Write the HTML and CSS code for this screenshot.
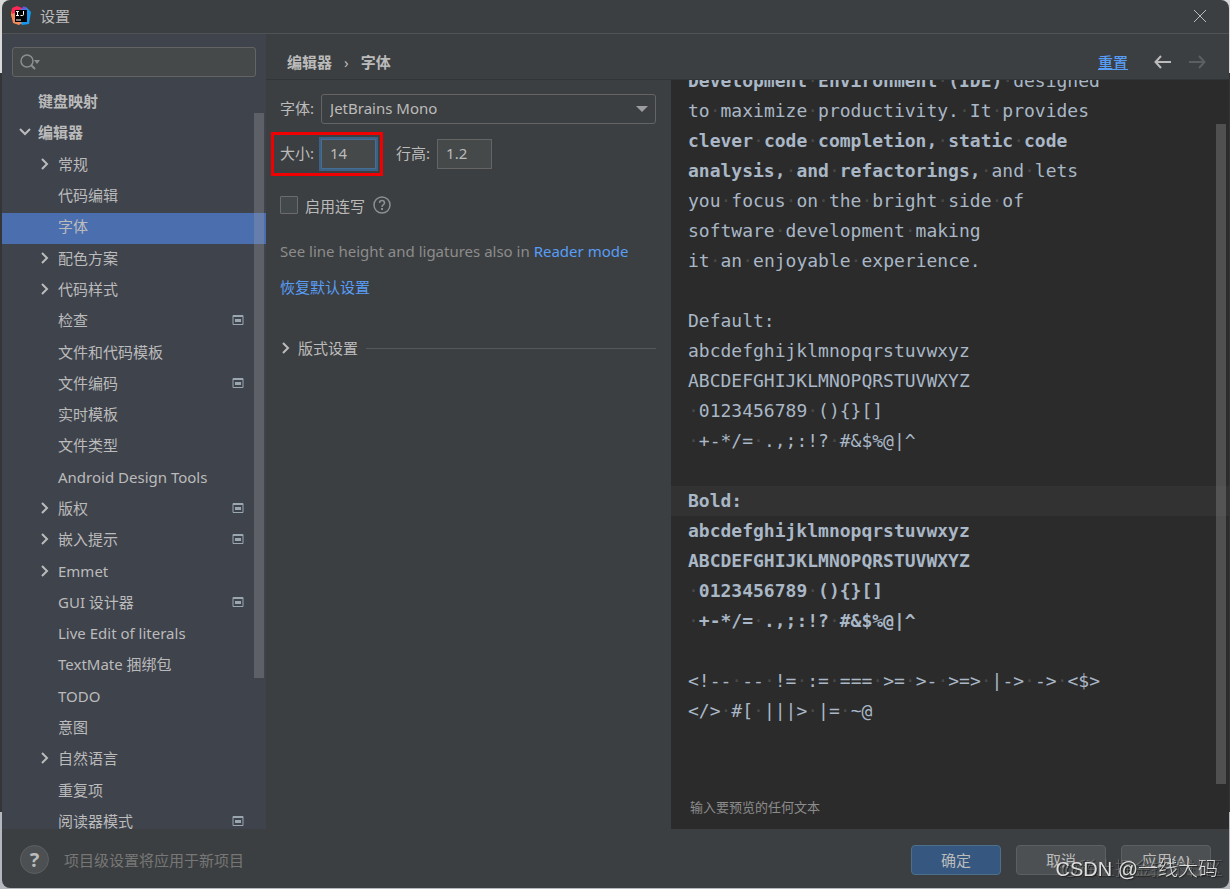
FILE: index.html
```html
<!DOCTYPE html>
<html lang="zh-CN">
<head>
<meta charset="UTF-8">
<meta name="viewport" content="width=device-width, initial-scale=1.0">
<title>设置</title>
<link rel="stylesheet" href="styles.css">
</head>
<body>

<!-- Shared icons -->
<svg class="sprite" aria-hidden="true">
  <symbol id="chevron" viewBox="0 0 16 16"><path d="M5 3l5 5-5 5" fill="none" stroke="currentColor" stroke-width="2"/></symbol>
  <symbol id="project" viewBox="0 0 12 12"><path d="M1 1.500h10v9H1z" fill="none" stroke="currentColor" stroke-width="1"/><path d="M1 1h10v2H1zM3 5h6v3H3z" fill="currentColor"/></symbol>
</svg>

<div class="window">
  <header class="titlebar">
    <svg class="logo" viewBox="0 0 20 20">
      <path d="M1 3l6-2 4 4-5 9-5-2-1-4z" fill="#fc801d"/>
      <path d="M1 2l5-2 5 2-2 5-8 2z" fill="#fe2857"/>
      <path d="M10 3l5-2 5 5-2 12-7 1-3-4z" fill="#1798f0"/>
      <path d="M10 3l3-3 3 4z" fill="#7b4fd0"/>
      <path d="M0 8l5-1v6l6 4-3 2-6-2z" fill="#f58a5a"/>
      <path d="M4 4h12v12H4z" fill="#000"/>
      <path d="M5 5.500h3M6.500 5v5M5 9.500h3M12.500 5v3.500q0 1-1 1H9.500M5 14h5" fill="none" stroke="#fff"/>
    </svg>
    <span class="title">设置</span>
    <button class="close" aria-label="关闭"><svg viewBox="0 0 14 14"><path d="M1 1l12 12M13 1L1 13" stroke="currentColor"/></svg></button>
  </header>

  <div class="main">
    <aside class="sidebar">
      <div class="search">
        <svg viewBox="0 0 22 18"><circle cx="8" cy="8" r="6" fill="none" stroke="currentColor" stroke-width="1.500"/><path d="M12 12l4 4" stroke="currentColor" stroke-width="2"/><path d="M15 7h6l-3 4z" fill="currentColor"/></svg>
        <input type="text" aria-label="搜索">
      </div>
      <ul class="tree">
        <li class="top"><span>键盘映射</span></li>
        <li class="top open"><svg class="arrow"><use href="#chevron"/></svg><span>编辑器</span></li>
        <li><svg class="arrow"><use href="#chevron"/></svg><span>常规</span></li>
        <li><span>代码编辑</span></li>
        <li class="selected"><span>字体</span></li>
        <li><svg class="arrow"><use href="#chevron"/></svg><span>配色方案</span></li>
        <li><svg class="arrow"><use href="#chevron"/></svg><span>代码样式</span></li>
        <li><span>检查</span><svg class="badge"><use href="#project"/></svg></li>
        <li><span>文件和代码模板</span></li>
        <li><span>文件编码</span><svg class="badge"><use href="#project"/></svg></li>
        <li><span>实时模板</span></li>
        <li><span>文件类型</span></li>
        <li><span>Android Design Tools</span></li>
        <li><svg class="arrow"><use href="#chevron"/></svg><span>版权</span><svg class="badge"><use href="#project"/></svg></li>
        <li><svg class="arrow"><use href="#chevron"/></svg><span>嵌入提示</span><svg class="badge"><use href="#project"/></svg></li>
        <li><svg class="arrow"><use href="#chevron"/></svg><span>Emmet</span></li>
        <li><span>GUI 设计器</span><svg class="badge"><use href="#project"/></svg></li>
        <li><span>Live Edit of literals</span></li>
        <li><span>TextMate 捆绑包</span></li>
        <li><span>TODO</span></li>
        <li><span>意图</span></li>
        <li><svg class="arrow"><use href="#chevron"/></svg><span>自然语言</span></li>
        <li><span>重复项</span></li>
        <li><span>阅读器模式</span><svg class="badge"><use href="#project"/></svg></li>
      </ul>
      <div class="tree-scroll"></div>
    </aside>

    <section class="page">
      <div class="crumbs">
        <b>编辑器</b><span class="sep">›</span><b>字体</b>
        <a href="#" class="reset">重置</a>
        <button class="nav" aria-label="后退"><svg viewBox="0 0 18 14"><path d="M17 7H2M7 1L1.500 7 7 13" fill="none" stroke="currentColor" stroke-width="2"/></svg></button>
        <button class="nav" aria-label="前进" disabled><svg viewBox="0 0 18 14"><path d="M1 7h15M11 1l5.500 6L11 13" fill="none" stroke="currentColor" stroke-width="2"/></svg></button>
      </div>

      <div class="panes">
        <form class="settings">
          <div class="row">
            <label for="font">字体:</label>
            <div class="select"><select id="font"><option>JetBrains Mono</option></select></div>
          </div>
          <div class="row sizes">
            <div class="marked">
              <label for="size">大小:</label>
              <input id="size" class="num focused" type="text" value="14">
            </div>
            <label for="lineheight">行高:</label>
            <input id="lineheight" class="num" type="text" value="1.2">
          </div>
          <div class="row ligatures">
            <input id="lig" type="checkbox">
            <label for="lig">启用连写</label>
            <svg class="hint" viewBox="0 0 18 18"><circle cx="9" cy="9" r="8" fill="none" stroke="currentColor" stroke-width="1.500"/><path d="M6.500 7q0-2.500 2.500-2.500T11.500 7q0 1-1.300 1.800T9 11" fill="none" stroke="currentColor" stroke-width="1.500"/><path d="M8 12h2v2H8z" fill="currentColor"/></svg>
          </div>
          <p class="note">See line height and ligatures also in <a href="#">Reader mode</a></p>
          <p class="restore"><a href="#">恢复默认设置</a></p>
          <div class="group"><svg class="arrow"><use href="#chevron"/></svg><span>版式设置</span><hr></div>
        </form>

        <div class="preview">
          <div class="code">
            <div><b>Development<i>·</i>Environment<i>·</i>(IDE)</b><i>·</i>designed</div>
            <div>to<i>·</i>maximize<i>·</i>productivity.<i>·</i>It<i>·</i>provides</div>
            <div><b>clever<i>·</i>code<i>·</i>completion,<i>·</i>static<i>·</i>code</b></div>
            <div><b>analysis,<i>·</i>and<i>·</i>refactorings,</b><i>·</i>and<i>·</i>lets</div>
            <div>you<i>·</i>focus<i>·</i>on<i>·</i>the<i>·</i>bright<i>·</i>side<i>·</i>of</div>
            <div>software<i>·</i>development<i>·</i>making</div>
            <div>it<i>·</i>an<i>·</i>enjoyable<i>·</i>experience.</div>
            <div></div>
            <div>Default:</div>
            <div>abcdefghijklmnopqrstuvwxyz</div>
            <div>ABCDEFGHIJKLMNOPQRSTUVWXYZ</div>
            <div><i>·</i>0123456789<i>·</i>(){}[]</div>
            <div><i>·</i>+-*/=<i>·</i>.,;:!?<i>·</i>#&amp;$%@|^</div>
            <div></div>
            <div class="current"><b>Bold:</b></div>
            <div><b>abcdefghijklmnopqrstuvwxyz</b></div>
            <div><b>ABCDEFGHIJKLMNOPQRSTUVWXYZ</b></div>
            <div><b><i>·</i>0123456789<i>·</i>(){}[]</b></div>
            <div><b><i>·</i>+-*/=<i>·</i>.,;:!?<i>·</i>#&amp;$%@|^</b></div>
            <div></div>
            <div>&lt;!--<i>·</i>--<i>·</i>!=<i>·</i>:=<i>·</i>===<i>·</i>&gt;=<i>·</i>&gt;-<i>·</i>&gt;=&gt;<i>·</i>|-&gt;<i>·</i>-&gt;<i>·</i>&lt;$&gt;</div>
            <div>&lt;/&gt;<i>·</i>#[<i>·</i>|||&gt;<i>·</i>|=<i>·</i>~@</div>
          </div>
          <div class="code-scroll"></div>
          <p class="placeholder">输入要预览的任何文本</p>
        </div>
      </div>
    </section>
  </div>

  <footer class="footer">
    <button class="help" aria-label="帮助">?</button>
    <span class="status">项目级设置将应用于新项目</span>
    <button class="btn primary">确定</button>
    <button class="btn">取消</button>
    <button class="btn">应用(A)</button>
  </footer>
</div>

<div class="watermark back">@稀土掘金技术社区</div>
<div class="watermark">CSDN @一线大码</div>

</body>
</html>
```
FILE: styles.css
```css
:root {
  --bg: #3c3f41;
  --side: #3f434c;
  --text: #bbbbbb;
  --border: #646464;
  --link: #589df6;
}
* {
  box-sizing: border-box;
}
body {
  margin: 0;
  height: 100vh;
  padding: 0 1px 1px 2px;
  overflow: hidden;
  background: linear-gradient(#d9d9d9 0 73px, #333537 73px 812px, #b5b8be 812px);
  color: var(--text);
  font: 15px/20px "Noto Sans", "Noto Sans CJK SC", sans-serif;
}
button, input, select {
  font: inherit;
  color: inherit;
}
button {
  padding: 0;
  border: none;
  background: none;
}
a {
  color: var(--link);
  text-decoration: none;
}
p {
  margin: 0;
}
.sprite {
  display: none;
}
.window {
  height: 100%;
  display: flex;
  flex-direction: column;
  background: var(--bg);
  border-radius: 8px;
  overflow: hidden;
}

/* title bar */
.titlebar {
  height: 34px;
  flex: none;
  display: flex;
  align-items: center;
  gap: 9px;
  padding: 0 22px 2px 9px;
  border-bottom: 1px solid #505355;
}
.logo {
  width: 20px;
  height: 20px;
}
.close {
  margin-left: auto;
  width: 14px;
  height: 14px;
}
.close svg, .nav svg {
  display: block;
  width: 100%;
  height: 100%;
}
.main {
  flex: 1;
  min-height: 0;
  display: flex;
}

/* settings tree */
.sidebar {
  position: relative;
  width: 264px;
  flex: none;
  display: flex;
  flex-direction: column;
  background: var(--side);
  overflow: hidden;
}
.search {
  height: 30px;
  flex: none;
  margin: 13px 10px 11px;
  display: flex;
  align-items: center;
  padding: 0 6px;
  background: #45494a;
  border: 1px solid var(--border);
  border-radius: 3px;
}
.search svg {
  width: 22px;
  height: 18px;
  color: #8c8f91;
}
.search input {
  flex: 1;
  min-width: 0;
  border: none;
  outline: none;
  background: none;
}
.tree {
  flex: 1;
  display: flex;
  flex-direction: column;
  list-style: none;
  margin: 0 0 -10px;
  padding: 0;
}
.tree li {
  flex: 1;
  display: flex;
  align-items: center;
  padding: 0 22px 5px 56px;
  white-space: nowrap;
}
.tree .top {
  padding-left: 36px;
  font-weight: bold;
}
.tree .selected {
  background: #4b6eaf;
}
.arrow {
  flex: none;
  width: 16px;
  height: 16px;
}
.tree .arrow {
  margin-left: -21px;
  margin-right: 5px;
}
.tree .open .arrow {
  transform: rotate(90deg);
}
.badge {
  width: 12px;
  height: 12px;
  margin-left: auto;
  color: #9aa7b0;
}
.tree-scroll {
  position: absolute;
  top: 79px;
  right: 2px;
  width: 10px;
  height: 565px;
  background: rgba(166,166,166,0.3);
}

/* right side */
.page {
  flex: 1;
  min-width: 0;
  display: flex;
  flex-direction: column;
}
.crumbs {
  height: 46px;
  flex: none;
  display: flex;
  align-items: center;
  padding: 10px 23px 0 21px;
  border-bottom: 1px solid #323537;
}
.sep {
  margin: 0 12px;
}
.reset {
  margin-left: auto;
  margin-right: 10px;
  font-weight: 500;
  text-decoration: underline;
}
.nav {
  width: 18px;
  height: 14px;
  margin-left: 16px;
}
.nav:disabled {
  color: #5c5f61;
}
.panes {
  flex: 1;
  min-height: 0;
  display: grid;
  grid-template-columns: 405fr 558fr;
}
.settings {
  min-width: 0;
  padding: 14px 15px 0 14px;
}
.row {
  display: flex;
  align-items: center;
}
.select {
  position: relative;
  flex: 1;
  margin-left: 7px;
}
.select select {
  display: block;
  width: 100%;
  height: 30px;
  padding: 0 8px 2px;
  appearance: none;
  background: var(--bg);
  border: 1px solid var(--border);
  border-radius: 3px;
}
.select::after {
  content: "";
  position: absolute;
  right: 8px;
  top: 12px;
  border: 6px solid transparent;
  border-top-color: #9b9d9e;
  border-bottom: none;
}
.row label {
  padding-bottom: 2px;
}
.marked {
  display: flex;
  align-items: center;
  height: 44px;
  margin-left: -9px;
  margin-right: 13px;
  padding: 0 4px 0 6px;
  border: 3px solid #f00000;
}
.sizes {
  margin-top: 8px;
}
.num {
  width: 55px;
  height: 30px;
  margin-left: 7px;
  padding: 0 8px 2px;
  background: #45494a;
  border: 1px solid var(--border);
  outline: none;
}
.num.focused {
  border-color: #466d94;
  box-shadow: 0 0 0 2px #3d6185;
}
.ligatures {
  margin-top: 18px;
}
.ligatures label {
  padding: 2px 0 0;
}
.ligatures input {
  appearance: none;
  width: 18px;
  height: 18px;
  margin: 0 7px 0 0;
  background: #43494a;
  border: 1px solid #6b6b6b;
  border-radius: 1px;
}
.hint {
  width: 18px;
  height: 18px;
  margin-left: 8px;
  color: #8c8f91;
}
.note {
  margin-top: 25px;
  color: #8c8c8c;
  white-space: nowrap;
}
.restore {
  margin-top: 16px;
}
.group {
  display: flex;
  align-items: center;
  margin-top: 41px;
}
.group .arrow {
  margin-left: -2px;
  margin-right: 4px;
}
.group hr {
  flex: 1;
  margin: 0 0 0 8px;
  border: none;
  border-top: 1px solid #55585a;
}

/* preview */
.preview {
  position: relative;
  min-width: 0;
  display: flex;
  flex-direction: column;
  justify-content: space-between;
  overflow: hidden;
  background: #2b2b2b;
}
.code {
  margin-top: -14px;
  color: #a9b7c6;
  font: 18px/30px "DejaVu Sans Mono", monospace;
}
.code div {
  height: 30px;
  padding-left: 17px;
  white-space: pre;
}
.code .current {
  background: #323232;
}
.code i {
  color: #484848;
  font-style: normal;
  font-weight: normal;
}
.code-scroll {
  position: absolute;
  top: 44px;
  right: 3px;
  width: 10px;
  height: 660px;
  background: rgba(166,166,166,0.3);
}
.placeholder {
  padding: 0 0 12px 19px;
  font-size: 13px;
  color: #8c8c8c;
}

/* bottom bar */
.footer {
  height: 59px;
  flex: none;
  display: flex;
  align-items: center;
  gap: 15px;
  padding: 2px 18px 0 18px;
}
.help {
  width: 29px;
  height: 29px;
  border: 1px solid #5e6060;
  border-radius: 50%;
  background: #4c5052;
  font-size: 20px;
  font-weight: bold;
}
.status {
  margin-right: auto;
  color: #777777;
}
.btn {
  width: 90px;
  height: 30px;
  background: #4c5052;
  border: 1px solid #5e6060;
  border-radius: 4px;
}
.primary {
  background: #365880;
  border-color: #4c708c;
}
.watermark {
  position: fixed;
  right: 12px;
  bottom: 8px;
  color: #dddddd;
  font: 20px/24px "Liberation Sans", "Noto Sans CJK SC", sans-serif;
  font-weight: 300;
  text-shadow: 1px 1px 1px #222;
  pointer-events: none;
}
.watermark.back {
  right: 7px;
  font-size: 18px;
  color: rgba(170,170,170,0.4);
}
```
